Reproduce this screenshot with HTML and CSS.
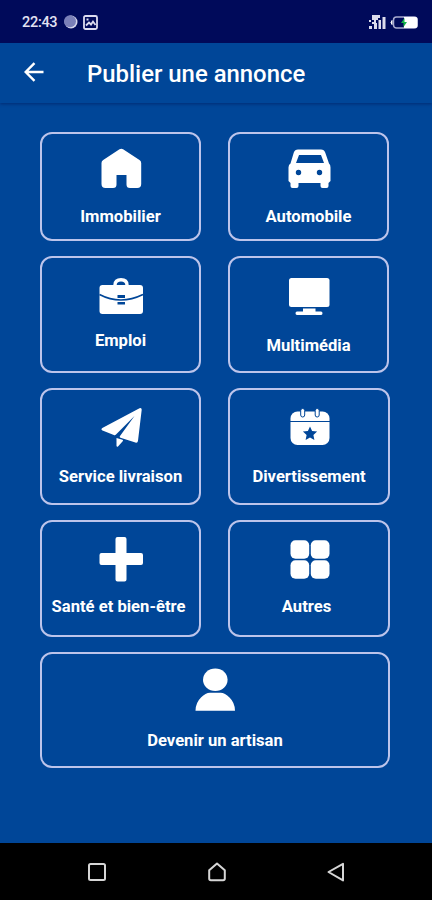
FILE: index.html
```html
<!DOCTYPE html>
<html lang="fr">
<head>
	<title>Publier une annonce</title>
	<meta charset="utf-8"/>
	<meta name="viewport" content="width=device-width, initial-scale=1">
	<link rel="stylesheet" href="styles.css">
</head>
<body>

<div class="statusbar">
	<span class="time">22:43</span>
	<svg class="moon" width="14" height="14" viewBox="0 0 14 14">
		<circle cx="7" cy="7" r="6.5" fill="#d5d7ec"/>
		<circle cx="6" cy="6.3" r="6" fill="#7a80b8"/>
	</svg>
	<svg class="photo" width="15" height="15" viewBox="0 0 15 15" fill="none" stroke="#dcdcf0" stroke-width="1.8">
		<rect x="1" y="1" width="13" height="13" rx="1.5"/>
		<path d="M3 10.500l3-3 2 2 2-3 2.500 3.500M3.500 4.500h2"/>
	</svg>
	<svg class="signal" width="17" height="14" viewBox="0 0 17 14" fill="#dcdcec">
		<path d="M0 5h2v2H0zM0 11h3v3H0zM3 0h8v3H9v2H7v3H5V5H3zM3 7h2v2H3zM5 8h3v6H5zM9.500 5h2.500v9H9.500zM13.500 2h3v12h-3z"/>
	</svg>
	<svg class="battery" width="28" height="13" viewBox="0 0 28 13">
		<rect x="3.500" y="1" width="23.500" height="11" rx="3" fill="none" stroke="#a9acd0" stroke-width="1.500"/>
		<path d="M14 1h11.500q2 0 2 2v7q0 2-2 2H14z" fill="#fff"/>
		<path d="M2 4.500Q0 6.500 2 8.500z" fill="#fff" stroke="#fff"/>
		<path d="M14.500 2l-3.500 5h2.500v4l3.500-5h-2.500z" fill="#16b34a"/>
	</svg>
</div>

<header class="toolbar">
	<svg class="back" width="20" height="20" viewBox="0 0 20 20" fill="none" stroke="#fff" stroke-width="2.400">
		<path d="M19.500 10H2M10.500 1.200L1.700 10l8.800 8.800"/>
	</svg>
	<h1>Publier une annonce</h1>
</header>

<main class="categories">
	<a class="card">
		<svg class="icon" viewBox="0 0 48 48">
			<path d="M22.500 2.200q1.800-1 3.600 0L42.500 13q1.700 1.200 1.700 3v21q0 4-4 4H33q-3.500 0-3.500-3.500V28h-10v9.500q0 3.500-3.500 3.500H8.500q-4 0-4-4V16q0-1.800 1.700-3z"/>
		</svg>
		<span class="label">Immobilier</span>
	</a>
	<a class="card narrow">
		<svg class="icon" viewBox="0 0 48 48">
			<path fill-rule="evenodd" d="M13 2.500h23q3.200 0 4.200 3L44 16.500q1.500 1.200 1.500 4V34l-2 2v3q0 2-2 2h-4q-2 0-2-2v-3h-22v3q0 2-2 2h-4q-2 0-2-2v-3l-2-2V20.500q0-2.800 2-4L8.800 5.500q1-3 4.200-3zM14 8l-3 8h28l-3-8zM13.500 22.800a2.700 2.700 0 1 0 0 5.400 2.700 2.700 0 0 0 0-5.400zM34.500 22.800a2.700 2.700 0 1 0 0 5.400 2.700 2.700 0 0 0 0-5.400z"/>
		</svg>
		<span class="label">Automobile</span>
	</a>
	<a class="card">
		<svg class="icon" viewBox="0 0 48 48">
			<path fill="none" stroke="#fff" stroke-width="3.400" d="M18 16v-2q0-5.300 6-5.300t6 5.300v2"/>
			<rect x="2.500" y="14" width="43.500" height="29" rx="3"/>
			<path class="cut-line" d="M2.500 23.500q21 11 43.500 0"/>
			<path class="cut" d="M20.500 24h7.500v3h-7.500zM20.500 31h7.500v2.500h-7.500z"/>
		</svg>
		<span class="label">Emploi</span>
	</a>
	<a class="card narrow low">
		<svg class="icon" viewBox="0 0 48 48">
			<rect x="4" y="7" width="40.500" height="29" rx="2.500"/>
			<path d="M18 37.500h12.500v3H36q1.500 0 1.500 1.800T36 44H12q-1.500 0-1.500-1.700T12 40.500h6z"/>
		</svg>
		<span class="label">Multimédia</span>
	</a>
	<a class="card mid">
		<svg class="icon" viewBox="0 0 48 48">
			<path d="M42.500 5.200q2.200-.8 2.200 1.600l-3.700 31q-.4 2.500-2.600 1.700L23.500 34.700q-1.500-.6-.5-1.800L37.500 13 19 31.500q-1 1-2.200.4L5.500 27.500q-2-1-.2-2.400zM19.500 35l6 1.800q1 .4.200 1.400L21 43.500q-1.200 1-1.500-.8z"/>
		</svg>
		<span class="label">Service livraison</span>
	</a>
	<a class="card mid">
		<svg class="icon" viewBox="0 0 48 48">
			<rect x="5.500" y="8.500" width="39" height="33.500" rx="7"/>
			<path class="cut-line thin" d="M5 18.500h40"/>
			<rect class="ring" x="15.700" y="5.500" width="4" height="8.500" rx="2"/>
			<rect class="ring" x="30.200" y="5.500" width="4" height="8.500" rx="2"/>
			<path class="cut" d="M25 23.500l2.100 4.500 5 .6-3.700 3.400 1 4.900-4.400-2.400-4.400 2.400 1-4.900-3.700-3.400 5-.6z"/>
		</svg>
		<span class="label">Divertissement</span>
	</a>
	<a class="card health">
		<svg class="icon" viewBox="0 0 48 48">
			<path d="M20.500 2h7q2 0 2 2v14H44q2 0 2 2v8q0 2-2 2H29.500v14.500q0 2-2 2h-7q-2 0-2-2V30h-14q-2 0-2-2v-8q0-2 2-2h14V4q0-2 2-2z"/>
		</svg>
		<span class="label">Santé et bien-être</span>
	</a>
	<a class="card others">
		<svg class="icon" viewBox="0 0 48 48">
			<rect x="5.500" y="5.300" width="18.700" height="18.500" rx="5"/>
			<rect x="25.800" y="5.300" width="18.700" height="18.500" rx="5"/>
			<rect x="5.500" y="25.300" width="18.700" height="18.500" rx="5"/>
			<rect x="25.800" y="25.300" width="18.700" height="18.500" rx="5"/>
		</svg>
		<span class="label">Autres</span>
	</a>
	<a class="card wide">
		<svg class="icon" viewBox="0 0 48 48">
			<ellipse cx="24.300" cy="12.800" rx="12.300" ry="11.300"/>
			<path d="M4.500 43.800q0-8 5.500-13.300 4.500-4.700 9-4.700h10.500q4.500 0 9 4.700 5.500 5.300 5.500 13.300z"/>
		</svg>
		<span class="label">Devenir un artisan</span>
	</a>
</main>

<nav class="navbar">
	<svg width="20" height="20" viewBox="0 0 20 20"><rect x="2" y="2" width="16" height="16" rx="1.500"/></svg>
	<svg width="20" height="20" viewBox="0 0 20 20"><path d="M10 1.500l7.800 6.800v8.200q0 1.700-1.700 1.700H3.900q-1.700 0-1.700-1.700V8.300z"/></svg>
	<svg width="20" height="20" viewBox="0 0 20 20"><path d="M17 1.800v16.600L2.500 10z"/></svg>
</nav>

</body>
</html>
```
FILE: styles.css
```css
* {
	box-sizing: border-box;
}

body {
	margin: 0;
	height: 900px;
	display: flex;
	flex-direction: column;
	background: #004698;
	color: white;
	font-family: Roboto, "Liberation Sans", sans-serif;
}

.statusbar {
	height: 43px;
	padding: 1px 14px 0 22px;
	display: flex;
	align-items: center;
	background: #000a5a;
}

.time {
	width: 42px;
	font-size: 14.5px;
	font-weight: 500;
	letter-spacing: -0.3px;
	color: #e2e2f2;
}

.photo {
	margin-left: 5px;
}

.signal {
	margin-left: auto;
	margin-right: 4px;
}

.toolbar {
	height: 60px;
	padding: 0 24px;
	display: flex;
	align-items: center;
	box-shadow: 0 1px 3px rgba(0,15,80,0.5);
}

.back {
	margin-top: -2px;
}

h1 {
	margin: 2px 0 0 43px;
	font-size: 23.9px;
	font-weight: 500;
	line-height: 30px;
	white-space: nowrap;
}

.categories {
	flex: 1;
	padding: 29px 41px 0 40px;
	display: grid;
	grid-template-columns: 161px 162px;
	grid-template-rows: 109px repeat(4, 117px);
	gap: 14.9px 27px;
	align-content: start;
}

.card {
	padding-top: 13px;
	display: flex;
	flex-direction: column;
	align-items: center;
	border: 2px solid #bcc4eb;
	border-radius: 12px;
}

.narrow {
	margin-right: 1px;
}

.wide {
	grid-column: 1 / 3;
	height: 116px;
}

.icon {
	width: 48px;
	height: 48px;
	flex-shrink: 0;
	fill: white;
}

.label {
	margin-top: 12px;
	font-size: 16.6px;
	font-weight: 700;
	line-height: 20px;
	white-space: nowrap;
}

.low .label {
	margin-top: 17px;
}

.mid .label,
.wide .label {
	margin-top: 16px;
}

.health .label {
	margin-top: 14px;
	margin-right: 4px;
}

.others .label {
	margin-top: 14px;
	margin-right: 5px;
}

.icon .cut {
	fill: #004698;
}

.cut-line {
	fill: none;
	stroke: #004698;
	stroke-width: 1.6;
}

.thin {
	stroke-width: 1;
}

.ring {
	stroke: #004698;
	stroke-width: 1;
}

.navbar {
	height: 57px;
	padding: 0 86px 0 87px;
	display: flex;
	align-items: center;
	justify-content: space-between;
	background: black;
}

.navbar svg {
	fill: none;
	stroke: #d6d6d6;
	stroke-width: 2;
	stroke-linejoin: round;
}
```
